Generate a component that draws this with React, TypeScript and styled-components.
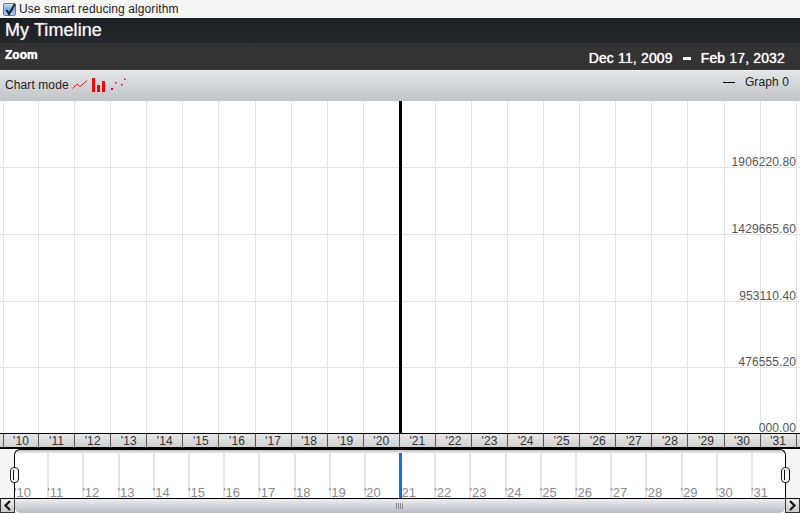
import styled, { createGlobalStyle } from "styled-components";

const years = Array.from({ length: 22 }, (_, i) => i + 10);
const axisValues = ["1906220.80", "1429665.60", "953110.40", "476555.20", "000.00"];

const App = () => {
  return (
    <>
      <GlobalStyle />
      <Page>
        <OptionRow>
          <CheckBox>
            <svg width="14" height="14" viewBox="0 0 14 14">
              <path d="M3.5 7 L6 11 L12 1" fill="none" stroke="#1b2433" strokeWidth="2.2" />
            </svg>
          </CheckBox>
          Use smart reducing algorithm
        </OptionRow>
        <TitleBar>My Timeline</TitleBar>
        <ZoomBar>
          <ZoomLabel>Zoom</ZoomLabel>
          <DateRange>
            <span>Dec 11, 2009</span>
            <DateDash />
            <span>Feb 17, 2032</span>
          </DateRange>
        </ZoomBar>
        <ModeBar>
          <ModeGroup>
            Chart mode
            <svg width="54" height="16" viewBox="0 0 54 16">
              <polyline points="0.5,10.5 5,6 8,8.5 15,2.5" fill="none" stroke="#f00" strokeWidth="0.9" />
              <rect x="20" width="3" y="0" height="14" fill="#f00" />
              <rect x="25" width="3" y="7" height="7" fill="#f00" />
              <rect x="30" width="3" y="3" height="11" fill="#f00" />
              <rect x="39" y="10" width="2" height="2" fill="#f00" />
              <rect x="43" y="4" width="1.5" height="1.5" fill="#f00" />
              <rect x="49" y="6" width="1.5" height="1.5" fill="#f00" />
              <rect x="52" y="0.5" width="1.5" height="1.5" fill="#f00" />
            </svg>
          </ModeGroup>
          <Legend>
            <LegendDash />
            Graph 0
          </Legend>
        </ModeBar>
        <Chart>
          <ChartColumns>
            {years.map((y) => (
              <ChartColumn key={y} />
            ))}
          </ChartColumns>
          <ChartRows>
            {axisValues.map((v) => (
              <ChartRow key={v}>{v}</ChartRow>
            ))}
          </ChartRows>
          <Marker />
        </Chart>
        <Scale>
          {years.map((y) => (
            <ScaleCell key={y}>'{y}</ScaleCell>
          ))}
        </Scale>
        <Overview>
          <Window>
            <WindowColumns>
              {years.map((y) => (
                <WindowColumn key={y}>'{y}</WindowColumn>
              ))}
            </WindowColumns>
            <WindowMarker />
            <Handle $side="left" />
            <Handle $side="right" />
          </Window>
        </Overview>
        <ScrollBar>
          <ScrollButton>
            <svg width="9" height="11" viewBox="0 0 9 11">
              <path d="M7 1 L2.5 5.5 L7 10" fill="none" stroke="#111" strokeWidth="2.2" />
            </svg>
          </ScrollButton>
          <ScrollTrack>
            <Grip />
          </ScrollTrack>
          <ScrollButton>
            <svg width="9" height="11" viewBox="0 0 9 11">
              <path d="M2 1 L6.5 5.5 L2 10" fill="none" stroke="#111" strokeWidth="2.2" />
            </svg>
          </ScrollButton>
        </ScrollBar>
      </Page>
    </>
  );
};

export default App;

const GlobalStyle = createGlobalStyle`
  html, body {
    margin: 0;
    padding: 0;
    background: #f5f5f5;
  }
  * {
    box-sizing: border-box;
  }
`;

const Page = styled.div`
  width: 800px;
  height: 513px;
  overflow: hidden;
  display: flex;
  flex-direction: column;
  font-family: "Liberation Sans", Arial, sans-serif;
  font-size: 12px;
  letter-spacing: 0.1px;
  color: #222;
  background: #f5f5f5;
`;

const OptionRow = styled.div`
  height: 18px;
  display: flex;
  align-items: center;
  gap: 3px;
  padding-left: 3px;
`;

const CheckBox = styled.span`
  width: 13px;
  height: 13px;
  display: block;
  border: 1px solid #5a7ea8;
  border-radius: 2px;
  background: linear-gradient(#c4dcf4, #7eaee4 50%, #a9d0f4);
  svg {
    display: block;
    margin: -1px 0 0 -1px;
  }
`;

const TitleBar = styled.div`
  height: 25px;
  padding-left: 5px;
  line-height: 24px;
  font-size: 18px;
  letter-spacing: 0.08px;
  color: #f4f4f4;
  text-shadow: 0 0 1px rgba(255, 255, 255, 0.7);
  background: linear-gradient(#1c1f22, #24282b);
`;

const ZoomBar = styled.div`
  height: 27px;
  display: flex;
  justify-content: space-between;
  padding: 5px 15px 0 5px;
  background: #333;
  color: #fff;
  text-shadow: 0 0 1px #fff;
`;

const ZoomLabel = styled.div`
  font-weight: bold;
  font-size: 12px;
  letter-spacing: 0;
`;

const DateRange = styled.div`
  display: flex;
  align-items: center;
  gap: 10px;
  height: 20px;
  font-size: 14px;
  letter-spacing: 0.15px;
`;

const DateDash = styled.span`
  width: 8px;
  height: 3px;
  background: #fff;
`;

const ModeBar = styled.div`
  height: 31px;
  display: flex;
  justify-content: space-between;
  border-top: 1px solid #eef0f1;
  background: linear-gradient(#e3e5e8, #c0c4c6);
`;

const ModeGroup = styled.div`
  display: flex;
  align-items: center;
  gap: 3px;
  padding: 0 0 3px 5px;

  svg {
    margin-top: 2px;
  }
`;

const Legend = styled.div`
  display: flex;
  gap: 10px;
  padding: 2px 11px 0 0;
  height: 20px;
  align-items: center;
`;

const LegendDash = styled.span`
  width: 12px;
  height: 1px;
  background: #000;
`;

const Chart = styled.div`
  position: relative;
  height: 332px;
  background: #fff;
`;

const ChartColumns = styled.div`
  position: absolute;
  inset: 0;
  display: flex;
  padding-left: 3px;
`;

const ChartColumn = styled.div`
  width: 36.08px;
  flex: none;
  border-right: 1px solid #e2e2e2;

  &:first-child {
    border-left: 1px solid #e2e2e2;
  }
`;

const ChartRows = styled.div`
  position: absolute;
  inset: 0;
  display: grid;
  grid-template-rows: 67px 67px 67px 66px 65px;
`;

const ChartRow = styled.div`
  border-bottom: 1px solid #e2e2e2;
  display: flex;
  justify-content: flex-end;
  align-items: flex-end;
  padding-right: 4px;
  color: #555;
  line-height: 10px;

  &:last-child {
    border-bottom: 0;
  }
`;

const Marker = styled.div`
  position: absolute;
  left: 399px;
  top: 0;
  bottom: 0;
  width: 3px;
  background: #000;
`;

const Scale = styled.div`
  height: 16px;
  display: flex;
  padding-left: 3px;
  border-top: 1px solid #000;
  border-bottom: 2px solid #000;
  background: linear-gradient(#e8e8e8, #cfcfcf);
`;

const ScaleCell = styled.div`
  width: 36.08px;
  flex: none;
  padding-top: 1px;
  border-right: 1px solid #555;
  text-align: center;
  line-height: 12px;
  color: #333;

  &:first-child {
    border-left: 1px solid #555;
  }
`;

const Overview = styled.div`
  height: 49px;
  padding: 0 14px;
`;

const Window = styled.div`
  position: relative;
  height: 100%;
  border: 1px solid #000;
  border-bottom: 0;
  border-radius: 6px 6px 0 0;
  background: linear-gradient(#bbb, #fff 4px);
`;

const WindowColumns = styled.div`
  height: 100%;
  display: flex;
  margin-left: -3px;
  padding-top: 3px;
  clip-path: inset(0 0 -4px 3px);
`;

const WindowColumn = styled.div`
  width: 35.2px;
  flex: none;
  display: flex;
  align-items: flex-end;
  border-left: 2px solid #e4e4e4;
  color: #8a8a8a;
  line-height: 10px;
  font-size: 13px;
  letter-spacing: 0;
  text-indent: -2px;

  &:first-child {
    border-left: 0;
    padding-left: 2px;
    text-indent: 0;
  }
`;

const WindowMarker = styled.div`
  position: absolute;
  left: 384px;
  top: 3px;
  bottom: 0;
  width: 3px;
  background: #1a6fd0;
`;

const Handle = styled.div<{ $side: "left" | "right" }>`
  position: absolute;
  top: 17px;
  ${({ $side }) => ($side === "left" ? "left: -5px;" : "right: -5px;")}
  width: 9px;
  height: 16px;
  border: 1px solid #222;
  border-radius: 4px;
  background: #f8f8f8;

  &::after {
    content: "";
    position: absolute;
    left: 1.5px;
    top: 2px;
    bottom: 2px;
    width: 4px;
    border-left: 1px solid #111;
    border-right: 1px solid #111;
  }
`;

const ScrollBar = styled.div`
  height: 15px;
  display: flex;
  border-top: 1px solid #000;
`;

const ScrollButton = styled.div`
  width: 15px;
  flex: none;
  display: flex;
  align-items: center;
  justify-content: center;
  background: linear-gradient(#f0f0f0, #c8c8c8);
  border: 1px solid #333;
  border-top: 0;
`;

const ScrollTrack = styled.div`
  flex: 1;
  display: flex;
  align-items: center;
  justify-content: center;
  border-radius: 0 0 6px 6px;
  background: linear-gradient(#eceef2, #b9bbc4);
`;

const Grip = styled.div`
  width: 8px;
  height: 6px;
  background: repeating-linear-gradient(90deg, #888 0 1px, transparent 1px 2px);
`;
